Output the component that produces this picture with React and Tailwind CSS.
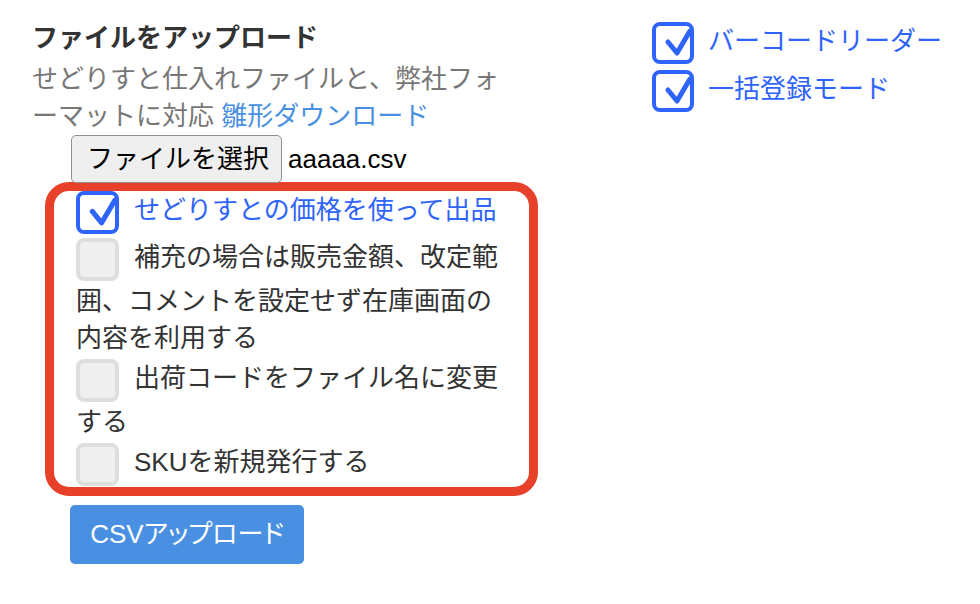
import React from "react";

const Check = () => (
  <svg viewBox="0 0 34 34" className="w-full h-full overflow-visible">
    <path
      d="M12 16 L21 27 L34 5"
      fill="none"
      stroke="#2f64fb"
      strokeWidth="5"
      strokeLinecap="round"
      strokeLinejoin="round"
    />
  </svg>
);

const Box = ({ checked }) =>
  checked ? (
    <span className="inline-block align-middle w-[43px] h-[43px] my-[2px] mr-[15px] rounded-[8px] border-[4px] border-[#2f64fb] bg-white">
      <Check />
    </span>
  ) : (
    <span className="inline-block align-middle w-[43px] h-[43px] my-[2px] mr-[15px] rounded-[8px] border-[4px] border-[#dedede] bg-[#efefef]" />
  );

const Option = ({ checked, children }) => (
  <label className={`block ${checked ? "text-[#2f64fb]" : "text-[#333]"}`}>
    <Box checked={checked} />
    {children}
  </label>
);

const SideOption = ({ children }) => (
  <label className="flex items-center h-[42px] text-[#2f64fb]">
    <span className="w-[42px] h-[42px] rounded-[8px] border-[4px] border-[#2f64fb] bg-white mr-[14px]">
      <Check />
    </span>
    <span className="-mt-[3px]">{children}</span>
  </label>
);

export default function App() {
  return (
    <div
      lang="ja"
      className="w-[980px] h-[604px] bg-white flex text-[26px] leading-[37px] text-[#333] font-['Liberation_Sans','Noto_Sans_CJK_JP',sans-serif] [line-break:loose]"
    >
      <div className="w-[652px] shrink-0 pl-[32px] pt-[20px]">
        <h2 className="font-bold">ファイルをアップロード</h2>
        <p className="mt-[4px] w-[480px] text-[#777]">
          せどりすと仕入れファイルと、弊社フォーマットに対応{" "}
          <a className="text-[#4a90e2]">雛形ダウンロード</a>
        </p>

        <div className="ml-[39px] mt-0 flex items-center">
          <button className="h-[48px] pl-[15px] pr-[12px] border-[1.5px] border-[#8f8f8f] rounded-[5px] bg-[#efefef] text-black">
            ファイルを選択
          </button>
          <span className="ml-[6px] text-black">aaaaa.csv</span>
        </div>

        <div className="ml-[13px] -mt-[1px] w-[493px] border-[9px] border-[#e8412a] rounded-[24px] px-[22px]">
          <div className="-mt-[2px] -mb-[1px]">
            <Option checked>せどりすとの価格を使って出品</Option>
            <Option>補充の場合は販売金額、改定範囲、コメントを設定せず在庫画面の内容を利用する</Option>
            <Option>出荷コードをファイル名に変更する</Option>
            <Option>SKUを新規発行する</Option>
          </div>
        </div>

        <button className="ml-[38px] mt-[9px] w-[234px] h-[59px] rounded-[5px] bg-[#4a90e2] text-white [font-feature-settings:'palt']">
          CSVアップロード
        </button>
      </div>

      <div className="pt-[22px] flex flex-col gap-[6px]">
        <SideOption>バーコードリーダー</SideOption>
        <SideOption>一括登録モード</SideOption>
      </div>
    </div>
  );
}
